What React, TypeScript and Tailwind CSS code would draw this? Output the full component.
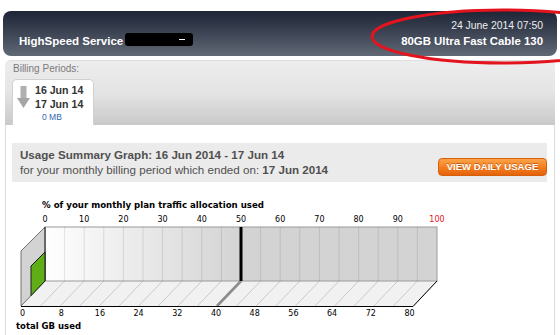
import React from "react";

const topLabels = [0, 10, 20, 30, 40, 50, 60, 70, 80, 90, 100];
const bottomLabels = [0, 8, 16, 24, 32, 40, 48, 56, 64, 72, 80];

function Chart() {
  const L = 45;
  const R = 437;
  const T = 227;
  const B = 281;
  const F = 306;
  const dx = -24;
  const step = (R - L) / 20;
  const lines = Array.from({ length: 21 }, (_, i) => L + step * i);
  return (
    <svg
      className="block mt-[8px]"
      width={548}
      height={145}
      viewBox="6 190 548 145"
    >
      <defs>
        <linearGradient id="wall" gradientUnits="userSpaceOnUse" x1={L} y1={0} x2={R} y2={0}>
          <stop offset="0" stopColor="#ffffff" />
          <stop offset="0.5" stopColor="#d3d3d3" />
          <stop offset="1" stopColor="#d3d3d3" />
        </linearGradient>
      </defs>
      <text
        x={42}
        y={207.5}
        fontFamily="'DejaVu Sans Condensed','DejaVu Sans',sans-serif"
        fontWeight="bold"
        fontSize={9.5}
        textLength={222}
        lengthAdjust="spacingAndGlyphs"
        fill="#000"
      >
        % of your monthly plan traffic allocation used
      </text>
      {topLabels.map((v, i) => (
        <text
          key={v}
          x={L + 39.2 * i}
          y={222}
          textAnchor="middle"
          fontFamily="'DejaVu Sans',sans-serif"
          fontSize={8}
          fill={v === 100 ? "#e4141b" : "#000"}
        >
          {v}
        </text>
      ))}
      {/* floor */}
      <polygon points={`${L},${B} ${R},${B} ${R + dx},${F} ${L + dx},${F}`} fill="#f1f1f1" />
      {lines.map((x, i) => (
        <line key={i} x1={x} y1={B} x2={x + dx} y2={F} stroke="#b0b0b0" strokeWidth={0.6} />
      ))}
      <line x1={241} y1={B} x2={241 + dx} y2={F} stroke="#8c8c8c" strokeWidth={2.6} />
      {/* back wall */}
      <rect x={L} y={T} width={R - L} height={B - T} fill="url(#wall)" stroke="#9a9a9a" strokeWidth={1} />
      {lines.slice(1, 20).map((x, i) => (
        <line key={i} x1={x} y1={T} x2={x} y2={B} stroke="rgba(0,0,0,0.1)" strokeWidth={1} />
      ))}
      <line x1={241} y1={T} x2={241} y2={B} stroke="#000" strokeWidth={3} />
      {/* side wall */}
      <polygon
        points={`${L},${T} ${L},${B} ${L + dx},${F} ${L + dx},${T - dx}`}
        fill="#d3d3d3"
        stroke="#555"
        strokeWidth={0.8}
      />
      <line x1={L} y1={T} x2={L} y2={B} stroke="#333" strokeWidth={1} />
      {/* green bar */}
      <polygon points="31,266 45,252 45,281 31,295.6" fill="#5fae17" stroke="#1a1a1a" strokeWidth={1} />
      {/* axis */}
      <line x1={L + dx} y1={F + 0.5} x2={R + dx} y2={F + 0.5} stroke="#000" strokeWidth={1.2} />
      <line x1={R + dx} y1={F + 0.5} x2={R} y2={B} stroke="#000" strokeWidth={1} />
      {bottomLabels.map((v, i) => (
        <text
          key={v}
          x={22.5 + 38.7 * i}
          y={316}
          textAnchor="middle"
          fontFamily="'DejaVu Sans',sans-serif"
          fontSize={8}
          fill="#000"
        >
          {v}
        </text>
      ))}
      <text
        x={16}
        y={328.5}
        fontFamily="'DejaVu Sans Condensed','DejaVu Sans',sans-serif"
        fontWeight="bold"
        fontSize={9.5}
        textLength={65}
        lengthAdjust="spacingAndGlyphs"
        fill="#000"
      >
        total GB used
      </text>
    </svg>
  );
}

export default function App() {
  return (
    <div className="relative w-[560px] h-[335px] overflow-hidden bg-white font-['Liberation_Sans',Arial,sans-serif]">
      {/* header */}
      <div className="mx-[3px] mt-[11px] h-[45px] rounded-[8px] bg-linear-to-b from-[#1e2536] to-[#616976] flex justify-between pl-[16px] pr-[14px]">
        <div className="flex items-start pt-[23px]">
          <span className="text-white font-bold text-[11.5px] leading-[14px]">HighSpeed Service</span>
          <span className="ml-[2px] mt-[-1px] w-[68px] h-[13px] bg-black rounded-[3px] flex items-center justify-end pr-[8px]">
            <span className="w-[6px] h-[1px] bg-white" />
          </span>
        </div>
        <div className="flex flex-col items-end pt-[9px]">
          <span className="text-[#ececec] text-[10.4px] leading-[12px]">24 June 2014 07:50</span>
          <span className="mt-[2px] text-white font-bold text-[11.4px] leading-[14px]">80GB Ultra Fast Cable 130</span>
        </div>
      </div>

      {/* billing periods panel */}
      <div className="mx-[5px] mt-[4px] h-[65px] rounded-t-[6px] border-t border-[#dedede] bg-linear-to-b from-[#ededed] via-[#e4e4e4] to-[#c9c9c9] flex flex-col">
        <div className="pl-[8px] pt-[2px] text-[10px] leading-[12px] text-[#7b7b7b]">Billing Periods:</div>
        <div className="ml-[7px] mt-[4px] h-[46px] w-[82px] bg-white rounded-t-[5px] border border-b-0 border-[#d0d0d0] pt-[3px] pl-[4px] flex items-start">
          <svg className="mt-[3px] shrink-0" width={13} height={22} viewBox="0 0 13 22">
            <rect x={3.5} y={0} width={6} height={12} fill="#b0b0b0" />
            <polygon points="0,12 13,12 6.5,22" fill="#a5a5a5" />
          </svg>
          <div className="ml-[5px] flex flex-col">
            <span className="text-[10.6px] leading-[14px] font-bold text-[#333]">16 Jun 14</span>
            <span className="text-[10.6px] leading-[14px] font-bold text-[#333]">17 Jun 14</span>
            <span className="pl-[7px] text-[8.5px] leading-[12px] text-[#2f64b0]">0 MB</span>
          </div>
        </div>
      </div>

      {/* content */}
      <div className="mx-[5px] h-[210px] border-x border-[#dcdcdc] flex flex-col">
        <div className="mt-[18px] ml-[6px] w-[535px] h-[39px] bg-[#ebebeb] flex justify-between">
          <div className="pl-[8px] pt-[5px] flex flex-col text-[#505050] text-[11.6px]">
            <span className="leading-[14px] font-bold">Usage Summary Graph: 16 Jun 2014 - 17 Jun 14</span>
            <span className="mt-[1px] leading-[14px]">
              for your monthly billing period which ended on: <b>17 Jun 2014</b>
            </span>
          </div>
          <div className="mt-[15px] h-[18px] w-[109px] rounded-[4px] border border-[#d5600c] bg-linear-to-b from-[#fda448] via-[#f47f1f] to-[#e4620b] flex items-center justify-center text-white font-bold text-[9.6px] [text-shadow:0_-1px_0_rgba(120,40,0,0.45)]">
            VIEW DAILY USAGE
          </div>
        </div>
        <Chart />
      </div>

      {/* red hand-drawn ellipse */}
      <svg className="absolute top-0 left-0 pointer-events-none" width={560} height={80} viewBox="0 0 560 80">
        <ellipse cx={503} cy={36.5} rx={131} ry={26.5} fill="none" stroke="#e3141e" strokeWidth={3} />
      </svg>
    </div>
  );
}
